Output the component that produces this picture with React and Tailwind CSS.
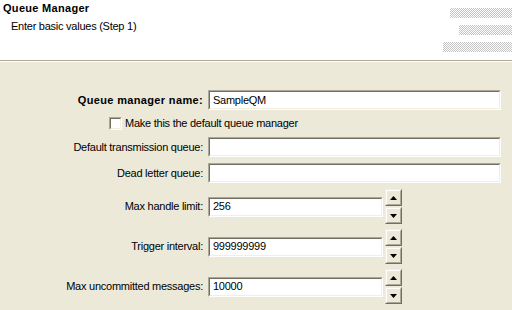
import React from 'react';

const font = { fontFamily: "'Liberation Sans', Arial, sans-serif" };

const Sunken = ({ className = '', children }) => (
  <div className={`border border-[#aca899] border-r-white border-b-white ${className}`}>
    <div className="h-full border border-[#716f64] border-r-[#f1efe2] border-b-[#f1efe2] bg-white">
      {children}
    </div>
  </div>
);

const TextField = ({ value = '', className = '' }) => (
  <Sunken className={`h-[20px] ${className}`}>
    <div className="h-full flex items-center pl-[3px] text-[11px] tracking-[-0.25px] leading-none text-black">{value}</div>
  </Sunken>
);

const Arrow = ({ up }) => (
  <svg width="7" height="4" viewBox="0 0 7 4">
    {up ? <path d="M3.5 0 L7 4 L0 4 Z" fill="#000" /> : <path d="M0 0 L7 0 L3.5 4 Z" fill="#000" />}
  </svg>
);

const SpinButton = ({ up }) => (
  <div className="w-[17px] h-[17px] border border-[#f1efe2] border-r-[#716f64] border-b-[#716f64]">
    <div className="h-full flex items-center justify-center border border-white border-r-[#aca899] border-b-[#aca899] bg-[#ece9d8]">
      <Arrow up={up} />
    </div>
  </div>
);

const Spinner = ({ label, value }) => (
  <div className="flex h-[35px] items-center">
    <div className="w-[204px] text-right text-[11px] tracking-[-0.25px] pr-[1px]">{label}</div>
    <div className="ml-[4px] flex items-center gap-[2px]">
      <TextField value={value} className="w-[175px]" />
      <div className="flex flex-col gap-[1px]">
        <SpinButton up />
        <SpinButton />
      </div>
    </div>
  </div>
);

const FieldRow = ({ label, value, bold }) => (
  <div className="flex h-[20px] items-center pr-[11px]">
    <div
      className={`w-[204px] text-right text-[11px] pr-[1px] ${
        bold ? 'font-bold tracking-[0.35px]' : 'tracking-[-0.25px]'
      }`}
    >
      {label}
    </div>
    <TextField value={value} className="ml-[4px] flex-1" />
  </div>
);

const checker =
  'bg-[conic-gradient(#c4c4c4_25%,#ffffff_0_50%,#c4c4c4_0_75%,#ffffff_0)] bg-[length:2px_2px]';

export default function App() {
  return (
    <div className="w-[512px] h-[310px] overflow-hidden bg-[#ece9d8] text-black" style={font}>
      {/* Banner */}
      <header className="h-[60px] bg-white flex justify-between">
        <div className="pt-[2px] pl-[3px]">
          <div className="text-[11px] font-bold tracking-[0.3px] leading-[13px]">Queue Manager</div>
          <div className="text-[11px] tracking-[-0.25px] leading-[13px] mt-[5px] pl-[8px]">
            Enter basic values (Step 1)
          </div>
        </div>
        <div className="flex flex-col items-end pt-[8px] gap-[7px]">
          <div className={`w-[62px] h-[10px] ${checker}`} />
          <div className={`w-[53px] h-[10px] ${checker}`} />
          <div className={`w-[69px] h-[10px] ${checker}`} />
        </div>
      </header>
      <div className="h-px bg-[#aca899]" />
      <div className="h-px bg-white" />

      {/* Form */}
      <main className="pt-[28px] flex flex-col">
        <FieldRow label="Queue manager name:" value="SampleQM" bold />
        <div className="mt-[7px] h-[13px] flex items-center pl-[109px]">
          <Sunken className="w-[13px] h-[13px]" />
          <span className="ml-[3px] text-[11px] tracking-[-0.25px]">Make this the default queue manager</span>
        </div>
        <div className="mt-[7px]">
          <FieldRow label="Default transmission queue:" />
        </div>
        <div className="mt-[6px]">
          <FieldRow label="Dead letter queue:" />
        </div>
        <div className="mt-[6px] flex flex-col gap-[5px]">
          <Spinner label="Max handle limit:" value="256" />
          <Spinner label="Trigger interval:" value="999999999" />
          <Spinner label="Max uncommitted messages:" value="10000" />
        </div>
      </main>
    </div>
  );
}
